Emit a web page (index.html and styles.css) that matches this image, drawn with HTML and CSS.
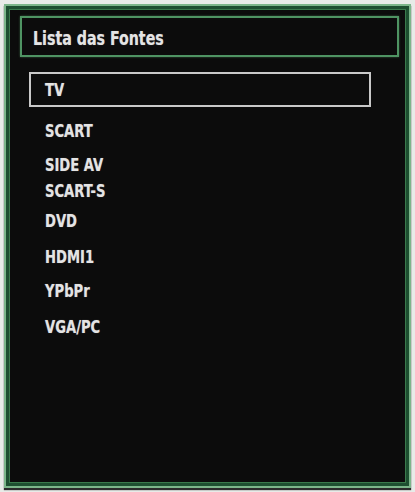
FILE: index.html
```html
<!DOCTYPE html>
<html lang="pt">
<head>
    <meta charset="UTF-8">
    <meta name="viewport" content="width=device-width, initial-scale=1.0">
    <title>Lista das Fontes</title>
    <link rel="stylesheet" href="styles.css">
</head>
<body>
    <div class="panel">
        <div class="panel-title"><span class="label">Lista das Fontes</span></div>

        <!-- Fontes de entrada -->
        <ul class="source-list">
            <li class="source selected"><span class="label">TV</span></li>
            <li class="source"><span class="label">SCART</span></li>
            <li class="source"><span class="label">SIDE AV</span></li>
            <li class="source tight"><span class="label">SCART-S</span></li>
            <li class="source close"><span class="label">DVD</span></li>
            <li class="source wide"><span class="label">HDMI1</span></li>
            <li class="source"><span class="label">YPbPr</span></li>
            <li class="source wide"><span class="label">VGA/PC</span></li>
        </ul>
    </div>
</body>
</html>
```

FILE: styles.css
```css
body {
    margin: 0;
    padding: 4px;
    background: #e8ebe8;
    font-family: 'DejaVu Sans Condensed', 'Liberation Sans', sans-serif;
    font-weight: bold;
    color: #e4e4e4;
}
.panel {
    box-sizing: border-box;
    width: 407px;
    height: 484px;
    background: #0c0c0c;
    border: 2px solid #7cb68a;
    box-shadow: inset 0 0 0 3px #1d4f30, inset 0 0 0 4px #3a7a4c, 0 2px 1px #2b2b2b;
    padding: 10px 10px 0 14px;
}
.panel-title {
    box-sizing: border-box;
    height: 41px;
    border: 2px solid #4f9463;
    box-shadow: 0 0 2px rgba(90, 170, 110, 0.5);
    padding: 3px 0 0 11px;
    display: flex;
    align-items: center;
    font-size: 20px;
}
/* the TV menu font is narrower than any installed one */
.label {
    display: inline-block;
    white-space: nowrap;
    transform-origin: left center;
    transform: scaleX(0.86);
    text-shadow: 0 0 1px rgba(255, 255, 255, 0.4);
}
.panel-title .label {
    transform: scaleX(0.79);
}
.source-list {
    list-style: none;
    margin: 15px 0 0 9px;
    padding: 0;
    width: 342px;
    display: flex;
    flex-direction: column;
    gap: 14px;
}
.source {
    font-size: 17px;
    line-height: 20px;
    padding-left: 16px;
}
.source.selected {
    border: 2px solid #c9c9c9;
    padding: 6px 14px 5px;
}
.source.tight {
    margin-top: -8px;
}
.source.close {
    margin-top: -4px;
}
.source.wide {
    margin-top: 2px;
}
```
